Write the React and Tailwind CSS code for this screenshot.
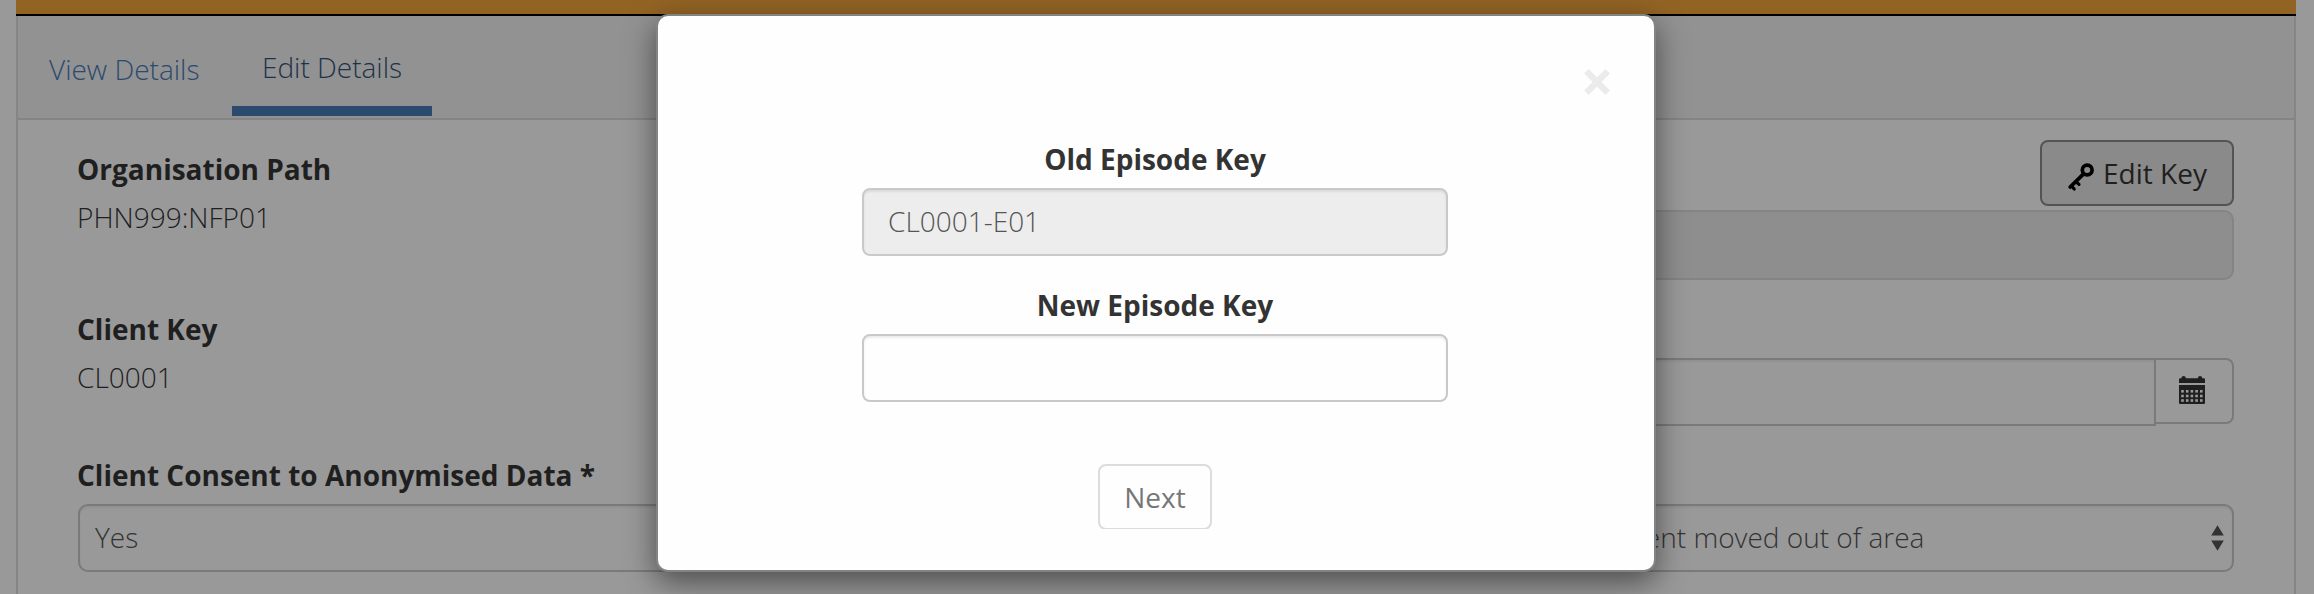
import React from "react";

function KeyIcon() {
  return (
    <svg className="block h-[30px] w-[28px] shrink-0" viewBox="0 0 28 30" fill="none" stroke="#000">
      <circle cx="20.2" cy="8" r="4.9" strokeWidth="3.7" />
      <path d="M16.6 11.8 L3.2 25" strokeWidth="3.8" strokeLinecap="round" />
      <path d="M4.6 24.2 L7.2 27 M9.4 20 L12 22.4" strokeWidth="3.2" strokeLinecap="round" />
    </svg>
  );
}

const COLS = [2.2, 6.9, 11.6, 16.3, 21];
const ROWS = [14, 18.7, 23.2];

function CalendarIcon() {
  return (
    <svg className="block h-7 w-[26px]" viewBox="0 0 26 28">
      <path
        fill="#1f1f1f"
        d="M0 7V3.4Q0 2.2 1.2 2.2H2.3Q2.6 0 4.6 0T7 2.2H18.8Q19 0 21 0T23.4 2.2H24.8Q26 2.2 26 3.4V7ZM0 9H26V27Q26 28 25 28H1Q0 28 0 27Z"
      />
      {ROWS.map((y) => COLS.map((x) => <rect key={x + "-" + y} x={x} y={y} width="2.6" height="2.6" fill="#999" />))}
    </svg>
  );
}

function Static({ label, value }) {
  return (
    <div className="-ml-px">
      <div className="h-12 font-bold">{label}</div>
      <div className="h-12">{value}</div>
    </div>
  );
}

export default function App() {
  return (
    <div className="relative h-[594px] w-[2314px] overflow-hidden bg-[#999] px-4 font-['Open_Sans',sans-serif] text-[28px] leading-[40px] font-light whitespace-nowrap text-[#1f1f1f]">
      <div className="flex h-full w-[2280px] flex-col">
        <div className="h-4 shrink-0 border-b-2 border-black bg-[#926424]" />
        <div className="flex min-h-0 flex-1 flex-col border-x-2 border-[#858585]">
          <nav className="flex h-[104px] shrink-0 items-start border-b-2 border-[#848484] bg-[#929292] pl-[31px]">
            <a className="w-[183px] pt-[33px] text-[#2b4a6e]">View Details</a>
            <a className="h-[100px] w-[200px] border-b-10 border-[#2b4a6e] pt-[31px] text-center text-[#1d324a]">Edit Details</a>
          </nav>

          <main className="flex flex-1 justify-between pr-15 pl-15">
            <section className="w-[1058px] pt-[29px]">
              <div className="h-40"><Static label="Organisation Path" value="PHN999:NFP01" /></div>
              <div className="h-[146px]"><Static label="Client Key" value="CL0001" /></div>
              <div className="-ml-px h-[49px] font-bold">Client Consent to Anonymised Data *</div>
              <div className="h-[68px] rounded-[10px] border-2 border-[#7a7a7a] px-[15px] pt-[11px] text-[#333] shadow-[inset_0_2px_2px_rgba(0,0,0,0.05)]">Yes</div>
            </section>

            <section className="w-[1058px] pt-5">
              <div className="flex justify-end">
                <button className="flex h-[66px] w-[194px] items-start rounded-lg border-2 border-[#545454] bg-[#8a8a8a] pt-[11px] pl-[25px] font-normal">
                  <span className="mt-[9px]"><KeyIcon /></span>
                  <span className="ml-[8px]">Edit Key</span>
                </button>
              </div>
              <div className="mt-1 h-[70px] rounded-[10px] border-2 border-[#848484] bg-[#8e8e8e]" />
              <div className="mt-[78px] flex items-start">
                <div className="h-[68px] flex-1 rounded-l-[10px] border-2 border-[#7a7a7a] shadow-[inset_0_2px_2px_rgba(0,0,0,0.05)]" />
                <div className="h-[66px] w-[78px] rounded-r-lg border-2 border-l-0 border-[#7a7a7a] pt-4 pl-[23px]">
                  <CalendarIcon />
                </div>
              </div>
              <div className="mt-[78px] flex h-[68px] items-start justify-between rounded-[10px] border-2 border-[#7a7a7a] pt-[11px] pr-2 pl-[25px] text-[#333] shadow-[inset_0_2px_2px_rgba(0,0,0,0.05)]">
                <span>Episode closed administratively - client moved out of area</span>
                <svg className="mt-2 h-[26px] w-[13px]" viewBox="0 0 13 26" fill="#333">
                  <path d="M6.5 0.3 12.8 10.6H0.2ZM6.5 25.7 12.8 15.4H0.2Z" />
                </svg>
              </div>
            </section>
          </main>
        </div>
      </div>

      <div className="absolute top-[14px] left-[656px] flex h-[558px] w-[1000px] flex-col items-center rounded-xl border-2 border-[#838383] bg-[#fefefe] pr-[2px] text-[#333] shadow-[0_10px_30px_rgba(0,0,0,0.5)]">
        <button className="mt-[53px] mr-[42px] self-end">
          <svg className="block h-[26px] w-[26px]" viewBox="0 0 26 26">
            <path d="M2.3 2.3 23.7 23.7M23.7 2.3 2.3 23.7" stroke="#ebebeb" strokeWidth="6.4" />
          </svg>
        </button>
        <div className="mt-[44px] h-[49px] font-bold">Old Episode Key</div>
        <div className="h-[68px] w-[586px] rounded-lg border-2 border-[#c9c9c9] bg-[#ededed] px-[24px] pt-[11px] text-[#555] shadow-[inset_0_2px_2px_rgba(0,0,0,0.075)]">CL0001-E01</div>
        <div className="mt-[29px] h-[49px] font-bold">New Episode Key</div>
        <div className="h-[68px] w-[586px] rounded-lg border-2 border-[#c9c9c9] shadow-[inset_0_2px_2px_rgba(0,0,0,0.075)]" />
        <div className="mt-[62px] h-[65px] overflow-hidden">
          <button className="block h-[66px] w-[114px] rounded-lg border-2 border-[#dcdcdc] text-center font-normal text-[#777]">Next</button>
        </div>
      </div>
    </div>
  );
}
